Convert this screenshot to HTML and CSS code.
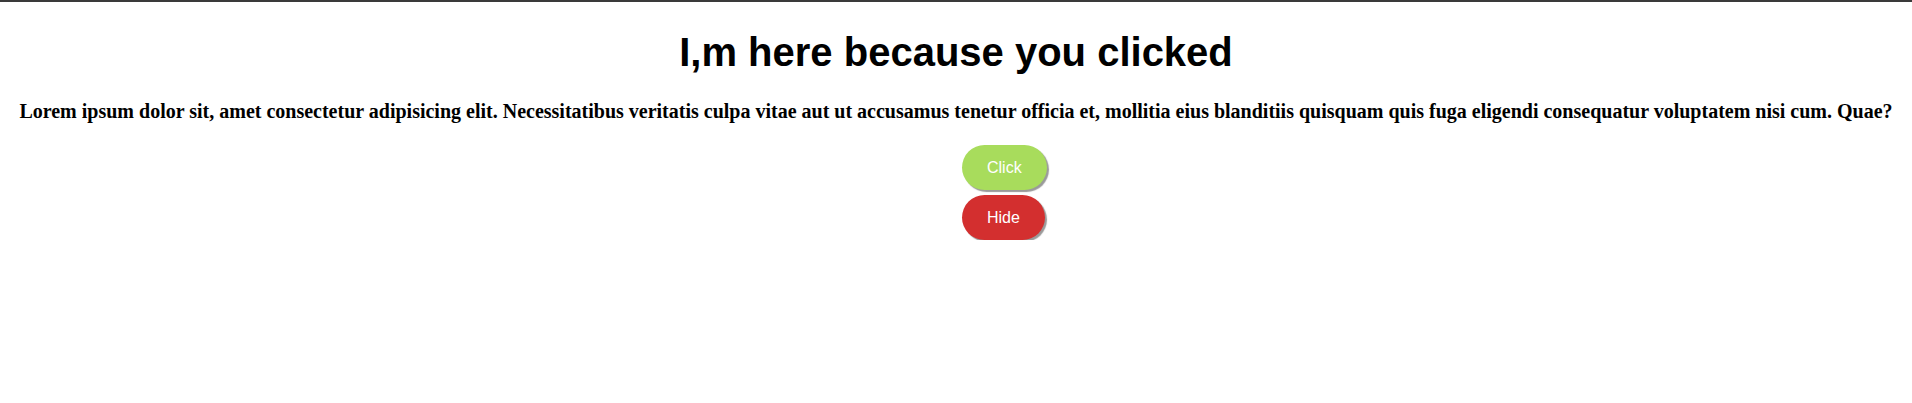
FILE: index.html
```html
<!DOCTYPE html>
<html lang="en">
<head>
<meta charset="utf-8">
<title>Clicked</title>
<link rel="stylesheet" href="styles.css">
</head>
<body>
<main class="page">
  <h1 class="title">I,m here because you clicked</h1>
  <p class="text">Lorem ipsum dolor sit, amet consectetur adipisicing elit. Necessitatibus veritatis culpa vitae aut ut accusamus tenetur officia et, mollitia eius blanditiis quisquam quis fuga eligendi consequatur voluptatem nisi cum. Quae?</p>
  <div class="actions">
    <button class="btn btn-click">Click</button>
    <button class="btn btn-hide">Hide</button>
  </div>
</main>
</body>
</html>
```

FILE: styles.css
```css
html, body {
  margin: 0;
  padding: 0;
  background: #fff;
}
body {
  border-top: 2px solid #3a3a3a;
}
.page {
  padding: 0 8px;
  text-align: center;
}
.title {
  font-family: "Liberation Sans", Arial, sans-serif;
  font-weight: bold;
  font-size: 40px;
  margin: 27px 0 0;
  line-height: 46px;
  color: #000;
}
.text {
  font-family: "Liberation Serif", "Times New Roman", serif;
  font-weight: bold;
  font-size: 20px;
  margin: 25px 0 0;
  color: #000;
}
.actions {
  display: flex;
  flex-direction: column;
  align-items: flex-start;
  gap: 5px;
  margin-top: 22px;
  padding-left: calc(50% + 6px);
}
.btn {
  font-family: "Liberation Sans", Arial, sans-serif;
  font-size: 16px;
  color: #fff;
  border: none;
  border-radius: 23px;
  padding: 0 25px;
  height: 45px;
  box-shadow: 2px 2px 1px #9a9a9a;
  cursor: pointer;
}
.btn-click {
  background: #a8dc5c;
}
.btn-hide {
  background: #d32f2f;
}
```
